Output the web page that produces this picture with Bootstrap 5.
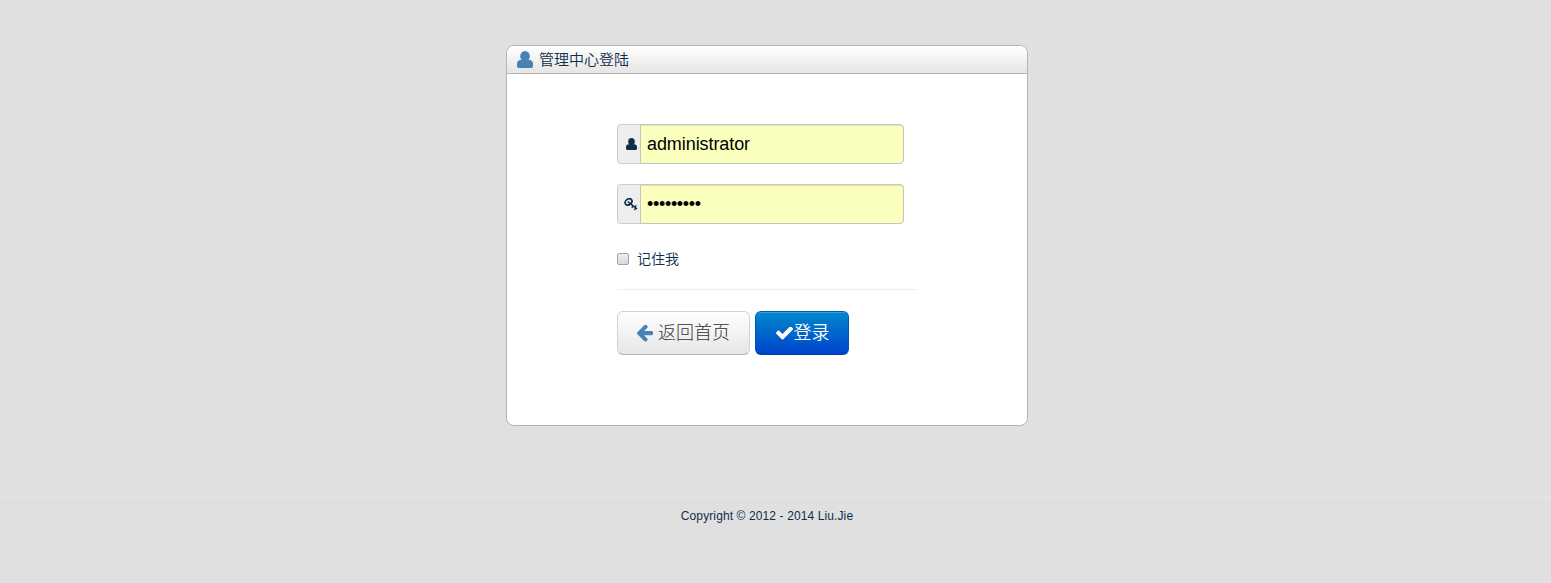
<!DOCTYPE html>
<html lang="zh-CN">
<head>
<meta charset="utf-8">
<meta name="viewport" content="width=device-width, initial-scale=1">
<title>管理中心登陆</title>
<link href="https://cdn.jsdelivr.net/npm/bootstrap@5.3.0/dist/css/bootstrap.min.css" rel="stylesheet">
<style>
body{background:#e0e0e0;color:#0e2f4b;font:14px/20px "Liberation Sans","Noto Sans CJK SC",sans-serif;overflow:hidden}
.login-stage{padding:45px 17px 0 0;height:496px}
.login-box{width:522px;height:381px;border:1px solid #b4b4b4;border-radius:8px;background:#fff}
.login-head{height:28px;padding:0 0 0 10px;border-bottom:1px solid #b4b4b4;border-radius:7px 7px 0 0;background:linear-gradient(#fff,#e5e5e5);font-size:15px}
.login-head span{margin-left:6px;font-weight:350}
.login-body{padding:50px 110px 0}
.field{width:287px;height:40px;margin-bottom:20px}
.field .input-group-text{width:24px;padding:0 0 0 4px;background:#eee;border-color:#ccc;border-radius:4px 0 0 4px;color:#0e2f4b}
.field .form-control{padding:0 6px;border-color:#c5c5c5;border-radius:0 4px 4px 0;background:#faffbd;box-shadow:inset 0 1px 1px rgba(0,0,0,.1);font-size:18px;letter-spacing:-.08px;color:#000}
.field .form-control[type=password]{letter-spacing:-.33px}
.remember{height:20px;margin-top:25px}
.remember input{appearance:none;width:12px;height:12px;margin:0 8px 0 0;border:1px solid #a2a2a2;border-radius:2px;background:linear-gradient(#eee,#d9d9d9)}
.remember span{font-weight:350}
.rule{width:300px;height:1px;background:#eee;margin:20px 0 21px}
.actions{gap:5px}
.act{height:44px;border-radius:6px;font-size:18px;line-height:20px;padding:0}
.act-back{width:133px;gap:5px;border:1px solid #d2d2d2;border-bottom-color:#b3b3b3;background:linear-gradient(#fff,#e6e6e6);color:#333;font-weight:300}
.act-go{width:94px;gap:1px;padding-left:1px;border:1px solid #0058b5;border-bottom-color:#003d9c;background:linear-gradient(#08c,#04c);color:#fff;box-shadow:inset 0 1px 0 rgba(255,255,255,.2);font-weight:350}
.foot{border-top:1px solid #e5e5e5;padding:9px 17px 0 0;font-size:12px;letter-spacing:.11px}
svg{display:block;fill:currentColor;flex:none}
.tint{color:#4682b4}
</style>
</head>
<body>
<svg class="d-none">
<symbol id="user" viewBox="0 0 16 17" preserveAspectRatio="none"><ellipse cx="8" cy="5.2" rx="4.8" ry="5.2"/><path d="M0 15V13Q0 9 4.2 8.7Q8 10.8 11.8 8.7 16 9 16 13V15Q16 17 14 17H2Q0 17 0 15Z"/></symbol>
</svg>
<main class="login-stage d-flex justify-content-center">
<section class="login-box">
<div class="login-head d-flex align-items-center"><svg class="tint" width="16" height="17"><use href="#user"/></svg><span>管理中心登陆</span></div>
<form class="login-body">
<div class="input-group field flex-nowrap"><span class="input-group-text justify-content-center"><svg width="11" height="12"><use href="#user"/></svg></span><input class="form-control" type="text" value="administrator" aria-label="用户名"></div>
<div class="input-group field flex-nowrap"><span class="input-group-text justify-content-center"><svg width="14" height="13" viewBox="0 0 14 13"><g fill="none" stroke="currentColor"><ellipse cx="4.5" cy="3.9" rx="3.7" ry="2.8" transform="rotate(-35 4.5 3.9)" stroke-width="1.7"/><path d="M3.8 3.6 13 11" stroke-width="1.6"/><path d="M9.2 7.8 7.8 9.8M11.8 9.8l-1.4 2.2M10.8 9.2l1.5-1.8" stroke-width="1.4"/></g></svg></span><input class="form-control" type="password" value="password1" aria-label="密码"></div>
<label class="remember d-flex align-items-center"><input type="checkbox"><span>记住我</span></label>
<div class="rule"></div>
<div class="d-flex actions">
<button type="button" class="btn act act-back d-flex align-items-center justify-content-center"><svg class="tint" width="16" height="17" viewBox="64 210 1472 1564"><path d="M1536 896v128q0 53-32.5 90.5t-84.5 37.5h-704l293 294q38 36 38 90t-38 90l-75 76q-37 37-90 37-52 0-91-37l-651-652q-37-37-37-90 0-52 37-91l651-650q38-38 91-38 52 0 90 38l75 74q38 38 38 91t-38 91l-293 293h704q52 0 84.5 37.5t32.5 90.5z"/></svg><span>返回首页</span></button>
<button type="button" class="btn act act-go d-flex align-items-center justify-content-center"><svg width="17" height="13" viewBox="121 434 1550 1088"><path d="M1671 566q0 40-28 68l-724 724-136 136q-28 28-68 28t-68-28l-136-136-362-362q-28-28-28-68t28-68l136-136q28-28 68-28t68 28l294 295 656-657q28-28 68-28t68 28l136 136q28 28 28 68z"/></svg><span>登录</span></button>
</div>
</form>
</section>
</main>
<footer class="foot text-center">Copyright © 2012 - 2014 Liu.Jie</footer>
<script src="https://cdn.jsdelivr.net/npm/bootstrap@5.3.0/dist/js/bootstrap.bundle.min.js"></script>
</body>
</html>
